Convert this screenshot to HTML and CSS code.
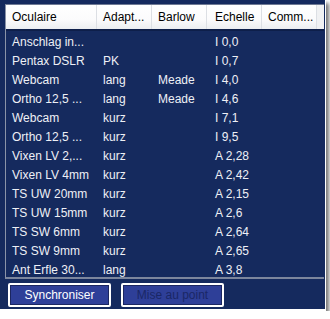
FILE: index.html
```html
<!DOCTYPE html>
<html lang="fr">
<head>
    <meta charset="UTF-8">
    <title>Oculaires</title>
    <link rel="stylesheet" href="styles.css">
</head>
<body>

<div class="frame">
    <div class="list">
        <div class="list-head">
            <div class="col c1">Oculaire</div>
            <div class="col c2">Adapt...</div>
            <div class="col c3">Barlow</div>
            <div class="col c4">Echelle</div>
            <div class="col c5">Comm...</div>
            <div class="col filler"></div>
        </div>
        <div class="list-body">
            <div class="row"><div class="col c1">Anschlag in...</div><div class="col c2"></div><div class="col c3"></div><div class="col c4">I 0,0</div></div>
            <div class="row"><div class="col c1">Pentax DSLR</div><div class="col c2">PK</div><div class="col c3"></div><div class="col c4">I 0,7</div></div>
            <div class="row"><div class="col c1">Webcam</div><div class="col c2">lang</div><div class="col c3">Meade</div><div class="col c4">I 4,0</div></div>
            <div class="row"><div class="col c1">Ortho 12,5 ...</div><div class="col c2">lang</div><div class="col c3">Meade</div><div class="col c4">I 4,6</div></div>
            <div class="row"><div class="col c1">Webcam</div><div class="col c2">kurz</div><div class="col c3"></div><div class="col c4">I 7,1</div></div>
            <div class="row"><div class="col c1">Ortho 12,5 ...</div><div class="col c2">kurz</div><div class="col c3"></div><div class="col c4">I 9,5</div></div>
            <div class="row"><div class="col c1">Vixen LV 2,...</div><div class="col c2">kurz</div><div class="col c3"></div><div class="col c4">A 2,28</div></div>
            <div class="row"><div class="col c1">Vixen LV 4mm</div><div class="col c2">kurz</div><div class="col c3"></div><div class="col c4">A 2,42</div></div>
            <div class="row"><div class="col c1">TS UW 20mm</div><div class="col c2">kurz</div><div class="col c3"></div><div class="col c4">A 2,15</div></div>
            <div class="row"><div class="col c1">TS UW 15mm</div><div class="col c2">kurz</div><div class="col c3"></div><div class="col c4">A 2,6</div></div>
            <div class="row"><div class="col c1">TS SW 6mm</div><div class="col c2">kurz</div><div class="col c3"></div><div class="col c4">A 2,64</div></div>
            <div class="row"><div class="col c1">TS SW 9mm</div><div class="col c2">kurz</div><div class="col c3"></div><div class="col c4">A 2,65</div></div>
            <div class="row"><div class="col c1">Ant Erfle 30...</div><div class="col c2">lang</div><div class="col c3"></div><div class="col c4">A 3,8</div></div>
        </div>
    </div>

    <div class="buttons">
        <button class="btn">Synchroniser</button>
        <button class="btn btn-off" aria-disabled="true">Mise au point</button>
    </div>
</div>

</body>
</html>
```

FILE: styles.css
```css
body { margin: 0; background-color: #fff; font-family: "Liberation Sans", Arial, sans-serif; font-size: 12px; }
.frame { width: 326px; height: 311px; background-color: #152a5e; border-right: 1px solid #fff; border-bottom: 2px solid #fff; box-shadow: 3px 3px 4px rgba(0,0,0,0.55); padding-top: 4px; padding-left: 5px; box-sizing: border-box; }

/* Liste des oculaires */
.list { width: 319px; height: 275px; border-top: 1px solid #6f7a94; border-left: 1px solid #8a93a8; border-bottom: 2px solid #7c869d; box-sizing: border-box; overflow: hidden; }
.list-head { display: flex; height: 26px; background: linear-gradient(#ffffff, #fbfbfc 60%, #eceef1); border-bottom: 2px solid #0e1f4a; box-sizing: border-box; color: #000; }
.list-head .col { border-right: 1px solid #dcdfe4; line-height: 24px; }
.list-head .filler { flex: 1; padding: 0; border-right: none; background: #f0f1f3; }
.col { padding-left: 6px; box-sizing: border-box; white-space: nowrap; overflow: hidden; flex-shrink: 0; }
.c1 { width: 91px; }
.c2, .c3, .c4, .c5 { width: 55px; }
.c4 { padding-left: 8px; }

.list-body { padding-top: 2px; }
.row { display: flex; height: 19px; line-height: 19px; color: #eef0f6; }

/* Boutons */
.buttons { display: flex; gap: 10px; padding-top: 4px; padding-left: 3px; }
.btn { width: 103px; height: 24px; padding: 0; background-color: #2e3f98; border: 2px solid #fff; border-radius: 2px; box-shadow: inset 0 0 0 1px #1b2660; color: #fff; font-family: "Liberation Sans", Arial, sans-serif; font-size: 12px; }
.btn-off { color: #1a2766; }
```
